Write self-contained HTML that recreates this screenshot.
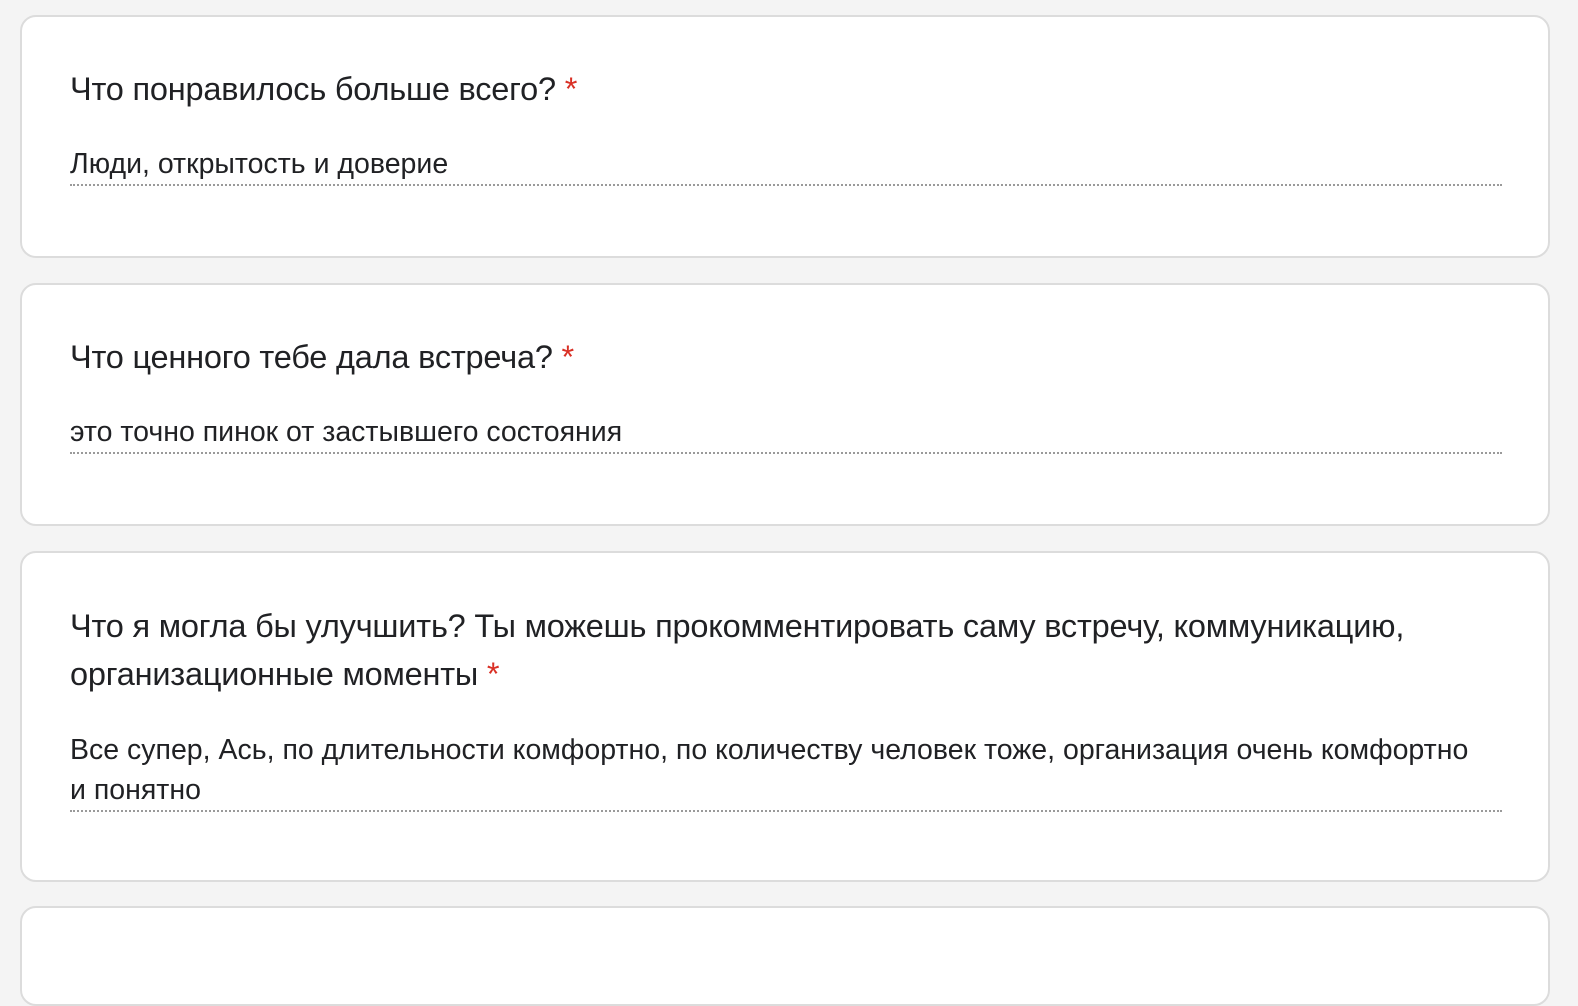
<!DOCTYPE html>
<html><head><meta charset="utf-8"><style>
html,body{margin:0;padding:0;background:#f4f4f4;width:1578px;height:914px;overflow:hidden;font-family:"Liberation Sans",sans-serif;color:#202124}
.card{position:absolute;left:20px;width:1530px;background:#fff;border:2px solid #dcdcdc;border-radius:16px;box-sizing:border-box}
.q{position:absolute;left:48px;font-size:32.5px;line-height:48px;letter-spacing:-0.2px}
.q .s{color:#d93025}
.a{position:absolute;left:48px;width:1432px;font-size:28.5px;line-height:40px;border-bottom:2px dotted #9a9a9a;padding-bottom:0px;letter-spacing:0px}
</style></head><body>
<div class="card" style="top:15px;height:243px">
 <div class="q" style="top:48px">Что понравилось больше всего? <span class="s">*</span></div>
 <div class="a" style="top:127px">Люди, открытость и доверие</div>
</div>
<div class="card" style="top:283px;height:243px">
 <div class="q" style="top:48px">Что ценного тебе дала встреча? <span class="s">*</span></div>
 <div class="a" style="top:127px">это точно пинок от застывшего состояния</div>
</div>
<div class="card" style="top:551px;height:331px">
 <div class="q" style="top:49px;width:1420px">Что я могла бы улучшить? Ты можешь прокомментировать саму встречу, коммуникацию, организационные моменты <span class="s">*</span></div>
 <div class="a" style="top:177px">Все супер, Ась, по длительности комфортно, по количеству человек тоже, организация очень комфортно<br>и понятно</div>
</div>
<div class="card" style="top:906px;height:100px"></div>
</body></html>
